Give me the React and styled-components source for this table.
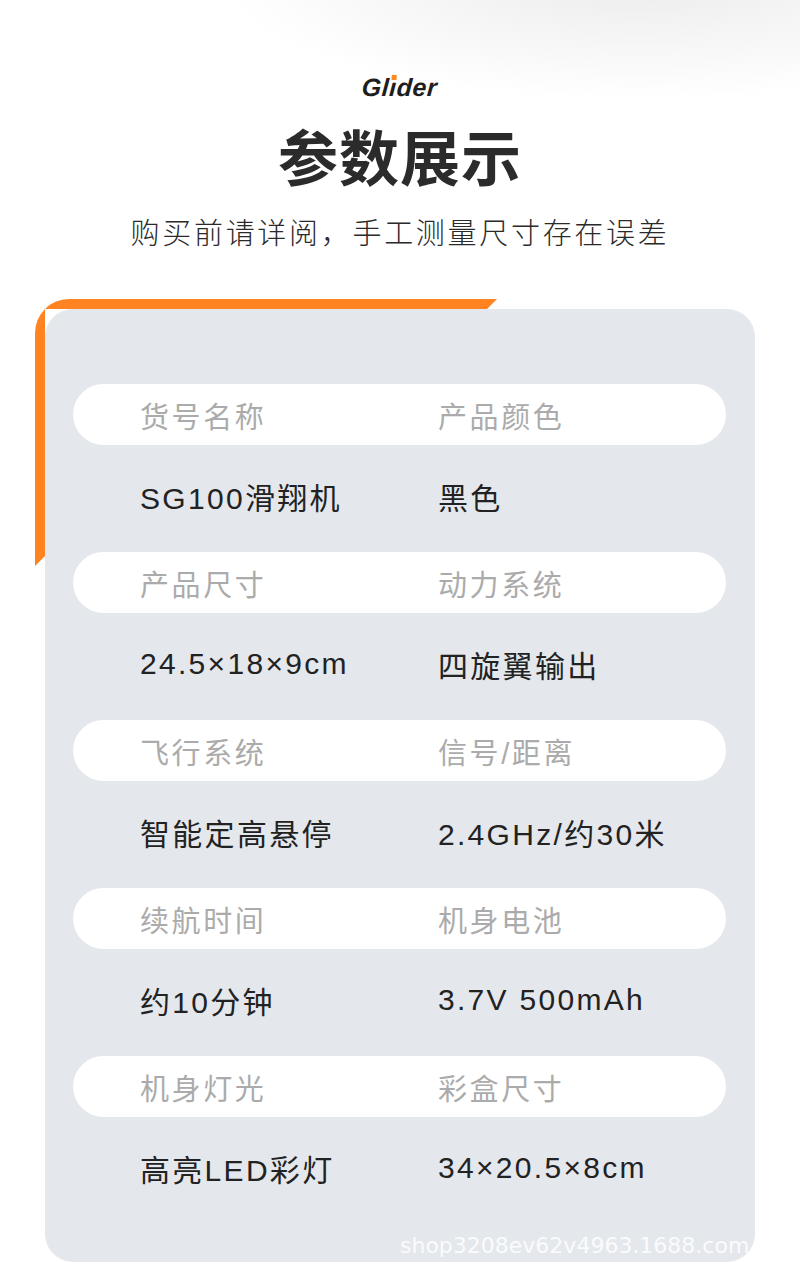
import styled, { createGlobalStyle } from 'styled-components'

const GlobalStyle = createGlobalStyle`
    body {
        margin: 0;
        background: #fff;
        font-family: "Liberation Sans", "Noto Sans CJK SC", sans-serif;
    }
`

const Page = styled.div`
    width: 800px;
    height: 1277px;
    overflow: hidden;
    background:
        radial-gradient(ellipse 420px 120px at 640px -20px, #ececec 0%, rgba(255,255,255,0) 100%),
        #fff;
`

const Header = styled.header`
    display: flex;
    flex-direction: column;
    align-items: center;
    padding-top: 72px;
`

const Brand = styled.div`
    font-family: "Liberation Sans", sans-serif;
    font-weight: 700;
    font-style: italic;
    font-size: 25px;
    line-height: 30px;
    color: #1e1e1e;
    letter-spacing: 0.5px;
    transform: skewX(-4deg);
`

const DotlessI = styled.span`
    position: relative;
    &::after {
        content: '';
        position: absolute;
        left: 2px;
        top: 2px;
        width: 5px;
        height: 5px;
        background: #ff8a1e;
    }
`

const Title = styled.h1`
    margin: 18px 0 0;
    font-family: "Noto Sans CJK SC", sans-serif;
    font-weight: 700;
    font-size: 60px;
    line-height: 70px;
    letter-spacing: 1px;
    color: #2b2b2b;
`

const Subtitle = styled.p`
    margin: 21px 0 0;
    font-family: "Noto Sans CJK SC", sans-serif;
    font-weight: 300;
    font-size: 29px;
    line-height: 40px;
    letter-spacing: 2.7px;
    color: #2a2a2a;
`

const CardFrame = styled.div`
    position: relative;
    margin: 48px 45px 0 35px;
    padding: 10px 0 0 10px;
    &::before {
        content: '';
        position: absolute;
        left: 0;
        top: 0;
        width: 470px;
        height: 280px;
        background: #ff8421;
        border-top-left-radius: 34px;
        clip-path: polygon(0 0, 462px 0, 452px 10px, 10px 10px, 10px 257px, 0 267px);
    }
`

const Card = styled.section`
    position: relative;
    overflow: hidden;
    background: #e4e7ec;
    border-radius: 28px;
    padding: 75px 29px 0 28px;
    height: 953px;
    box-sizing: border-box;
`

const Row = styled.div`
    display: grid;
    grid-template-columns: 298px 1fr;
    align-items: center;
    box-sizing: border-box;
    padding: 0 0 ${p => (p.$head ? '0' : '6px')} 67px;
    height: ${p => (p.$head ? '61px' : '107px')};
    background: ${p => (p.$head ? '#fff' : 'transparent')};
    border-radius: 31px;
    font-size: ${p => (p.$head ? '29px' : '30px')};
    letter-spacing: ${p => (p.$head ? '2.6px' : '2.3px')};
    color: ${p => (p.$head ? '#ababab' : '#222')};
    font-family: "Liberation Sans", "Noto Sans CJK SC", sans-serif;
`

const Watermark = styled.div`
    position: absolute;
    left: 355px;
    bottom: 4px;
    font-family: "DejaVu Sans", sans-serif;
    font-size: 22px;
    white-space: nowrap;
    color: rgba(255, 255, 255, 0.85);
`

const specs = [
    ['货号名称', '产品颜色', 'SG100滑翔机', '黑色'],
    ['产品尺寸', '动力系统', '24.5×18×9cm', '四旋翼输出'],
    ['飞行系统', '信号/距离', '智能定高悬停', '2.4GHz/约30米'],
    ['续航时间', '机身电池', '约10分钟', '3.7V 500mAh'],
    ['机身灯光', '彩盒尺寸', '高亮LED彩灯', '34×20.5×8cm'],
]

export default function App() {
    return (
        <Page>
            <GlobalStyle />
            <Header>
                <Brand>Gl<DotlessI>ı</DotlessI>der</Brand>
                <Title>参数展示</Title>
                <Subtitle>购买前请详阅，手工测量尺寸存在误差</Subtitle>
            </Header>
            <CardFrame>
                <Card>
                    {specs.map(([a, b, c, d]) => (
                        <div key={a}>
                            <Row $head>
                                <span>{a}</span>
                                <span>{b}</span>
                            </Row>
                            <Row>
                                <span>{c}</span>
                                <span>{d}</span>
                            </Row>
                        </div>
                    ))}
                    <Watermark>shop3208ev62v4963.1688.com</Watermark>
                </Card>
            </CardFrame>
        </Page>
    )
}
